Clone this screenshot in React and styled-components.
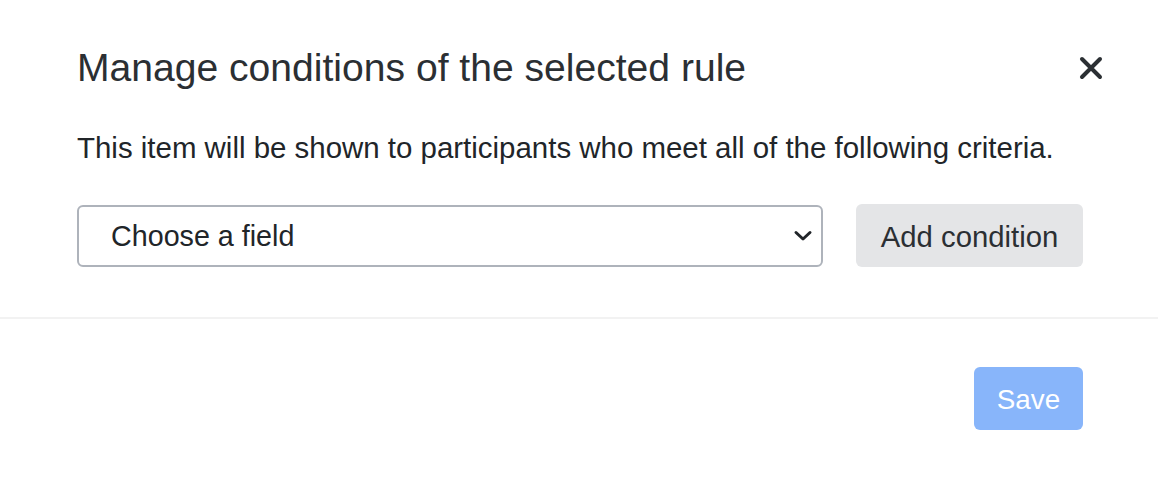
import styled, { createGlobalStyle } from 'styled-components';

const GlobalStyle = createGlobalStyle`
  body {
    margin: 0;
    background: #ffffff;
    font-family: "Liberation Sans", Arial, sans-serif;
    color: #212529;
  }
`;

const Modal = styled.div`
  width: 1158px;
  height: 478px;
  background: #fff;
  display: flex;
  flex-direction: column;
`;

const Header = styled.div`
  display: flex;
  align-items: center;
  justify-content: space-between;
  padding: 46px 54px 0 77px;
  height: 44px;
`;

const Title = styled.h2`
  margin: 0;
  font-size: 39.1px;
  font-weight: 400;
  color: #2b2f33;
  line-height: 44px;
`;

const CloseButton = styled.button`
  border: none;
  background: none;
  padding: 0;
  width: 26px;
  height: 26px;
  display: flex;
  align-items: center;
  justify-content: center;
  cursor: pointer;
`;

const Body = styled.div`
  padding: 40px 75px 50px 77px;
`;

const Text = styled.p`
  margin: 0 0 38px;
  font-size: 29.45px;
  line-height: 36px;
  color: #212529;
`;

const Row = styled.div`
  display: flex;
  gap: 33px;
  align-items: center;
`;

const SelectBox = styled.div`
  position: relative;
  width: 746px;
  height: 62px;
  box-sizing: border-box;
  border: 2px solid #aeb3bb;
  border-radius: 6px;
  display: flex;
  align-items: center;
  padding: 2px 0 0 32px;
  font-size: 28.7px;
  color: #212529;
`;

const Chevron = styled.svg`
  position: absolute;
  right: 8px;
  top: 50%;
  transform: translateY(-50%);
`;

const Button = styled.button`
  font-family: inherit;
  border: none;
  border-radius: 6px;
  font-size: ${(p) => p.$size}px;
  height: 63px;
  width: ${(p) => p.$w}px;
  padding: 2px 0 0;
  background: ${(p) => p.$bg};
  color: ${(p) => p.$fg};
`;

const Footer = styled.div`
  border-top: 2px solid #f2f2f2;
  display: flex;
  justify-content: flex-end;
  padding: 48px 75px 0 77px;
`;

export default function App() {
  return (
    <Modal>
      <GlobalStyle />
      <Header>
        <Title>Manage conditions of the selected rule</Title>
        <CloseButton aria-label="Close">
          <svg width="24" height="24" viewBox="0 0 24 24">
            <path d="M3 3 L21 21 M21 3 L3 21" stroke="#2b2f33" strokeWidth="4" strokeLinecap="round" />
          </svg>
        </CloseButton>
      </Header>
      <Body>
        <Text>This item will be shown to participants who meet all of the following criteria.</Text>
        <Row>
          <SelectBox>
            Choose a field
            <Chevron width="20" height="12" viewBox="0 0 20 12">
              <path d="M3 2.5 L10 9 L17 2.5" stroke="#212529" strokeWidth="3" fill="none" strokeLinecap="round" strokeLinejoin="round" />
            </Chevron>
          </SelectBox>
          <Button $bg="#e4e5e7" $fg="#2b2f33" $w={227} $size={29.3}>Add condition</Button>
        </Row>
      </Body>
      <Footer>
        <Button $bg="#88b5fa" $fg="#ffffff" $w={109} $size={27.8}>Save</Button>
      </Footer>
    </Modal>
  );
}
